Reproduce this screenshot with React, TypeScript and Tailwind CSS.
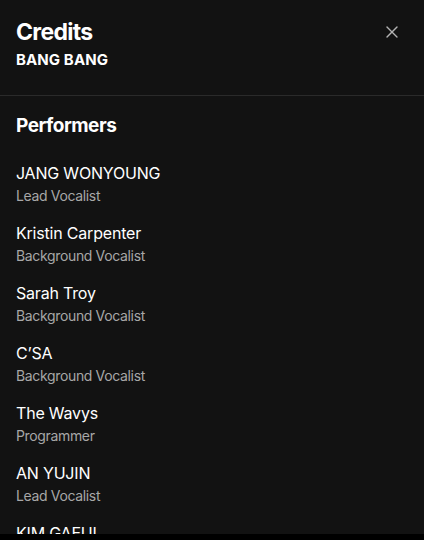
import { X } from 'lucide-react';

const performers = [
  { name: 'JANG WONYOUNG', role: 'Lead Vocalist' },
  { name: 'Kristin Carpenter', role: 'Background Vocalist' },
  { name: 'Sarah Troy', role: 'Background Vocalist' },
  { name: 'C’SA', role: 'Background Vocalist' },
  { name: 'The Wavys', role: 'Programmer' },
  { name: 'AN YUJIN', role: 'Lead Vocalist' },
  { name: 'KIM GAEUL', role: 'Lead Vocalist' },
];

export default function App() {
  return (
    <div
      className="flex h-[540px] w-[424px] flex-col overflow-hidden bg-black text-white"
      style={{ fontFamily: 'Inter, "Noto Sans", sans-serif' }}
    >
      <div className="flex min-h-0 flex-1 flex-col bg-[#121212]">
        <div className="flex items-start justify-between border-b border-[#2a2a2a] px-4 pt-4 pb-[25px]">
          <div>
            <h1 className="text-[23px] leading-8 font-bold tracking-[-0.7px]">Credits</h1>
            <p className="mt-[2px] text-[15px] leading-5 font-bold tracking-[0.1px]">BANG BANG</p>
          </div>
          <button className="mt-[6px] mr-[6px] text-[#b3b3b3]">
            <X size={20} strokeWidth={1.6} />
          </button>
        </div>

        <div className="px-4 pt-[16px]">
          <h2 className="text-[19px] leading-7 font-bold tracking-[-0.5px]">Performers</h2>
          <ul className="mt-[21px] flex flex-col gap-[14px]">
            {performers.map((p) => (
              <li key={p.name}>
                <div className="text-base leading-6 tracking-[-0.2px] text-white">{p.name}</div>
                <div className="text-sm leading-[22px] tracking-[-0.35px] text-[#a7a7a7]">{p.role}</div>
              </li>
            ))}
          </ul>
        </div>
      </div>
      <div className="h-[6px] shrink-0 bg-black" />
    </div>
  );
}
